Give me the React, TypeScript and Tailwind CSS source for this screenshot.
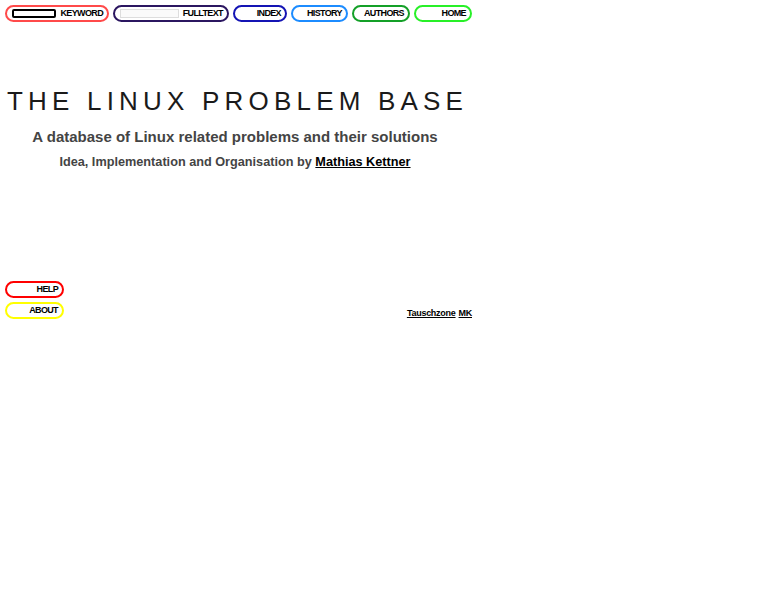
import type { ReactNode } from 'react';

function Pill({
  border,
  width,
  children,
}: {
  border: string;
  width: string;
  children: ReactNode;
}) {
  return (
    <div
      className={`flex h-[17px] ${width} items-center justify-end gap-1 rounded-full border-[2.5px] ${border} pr-[4px] pl-[5px]`}
    >
      {children}
    </div>
  );
}

function Label({ text }: { text: string }) {
  return (
    <span className="font-['Liberation_Sans',sans-serif] text-[9px] leading-none font-bold tracking-[-0.07em] text-black">
      {text}
    </span>
  );
}

export default function App() {
  return (
    <div className="min-h-[600px] bg-white font-['Liberation_Sans',sans-serif]">
      <div className="w-[472px] pt-[5px] pl-[5px]">
        <div className="flex items-center gap-[4px]">
          <Pill border="border-[#ff4a4a]" width="w-[104px]">
            <div className="mr-auto h-[9px] w-[47px] rounded-[2px] border-2 border-black" />
            <Label text="KEYWORD" />
          </Pill>
          <Pill border="border-[#2b1660]" width="w-[116px]">
            <div className="mr-auto h-[9px] w-[60px] border border-[#dddddd] bg-[#fafafa]" />
            <Label text="FULLTEXT" />
          </Pill>
          <Pill border="border-[#1414b4]" width="w-[54px]">
            <Label text="INDEX" />
          </Pill>
          <Pill border="border-[#1c8cff]" width="w-[57px]">
            <Label text="HISTORY" />
          </Pill>
          <Pill border="border-[#14a028]" width="w-[58px]">
            <Label text="AUTHORS" />
          </Pill>
          <Pill border="border-[#28f028]" width="w-[58px]">
            <Label text="HOME" />
          </Pill>
        </div>

        <div className="mt-[64px] flex flex-col items-center pr-[7px]">
          <h1 className="ml-[2px] self-start text-[26px] leading-[30px] font-normal tracking-[0.2em] whitespace-nowrap text-[#1a1a1a]">
            THE LINUX PROBLEM BASE
          </h1>
          <p className="mt-[12px] text-[15px] leading-[18px] font-bold whitespace-nowrap text-[#444444]">
            A database of Linux related problems and their solutions
          </p>
          <p className="mt-[8px] text-[12.7px] leading-[16px] font-bold whitespace-nowrap text-[#444444]">
            Idea, Implementation and Organisation by{' '}
            <a href="#" className="text-black underline">
              Mathias Kettner
            </a>
          </p>
        </div>

        <div className="mt-[111px] flex items-end justify-between">
          <div className="flex flex-col gap-[4px]">
            <Pill border="border-[#ff0000]" width="w-[59px]">
              <Label text="HELP" />
            </Pill>
            <Pill border="border-[#ffff00]" width="w-[59px]">
              <Label text="ABOUT" />
            </Pill>
          </div>
          <div className="mb-[1px] flex gap-[3px] text-[9px] leading-none font-bold tracking-[-0.03em]">
            <a href="#" className="text-black underline">
              Tauschzone
            </a>
            <a href="#" className="text-black underline">
              MK
            </a>
          </div>
        </div>
      </div>
    </div>
  );
}
